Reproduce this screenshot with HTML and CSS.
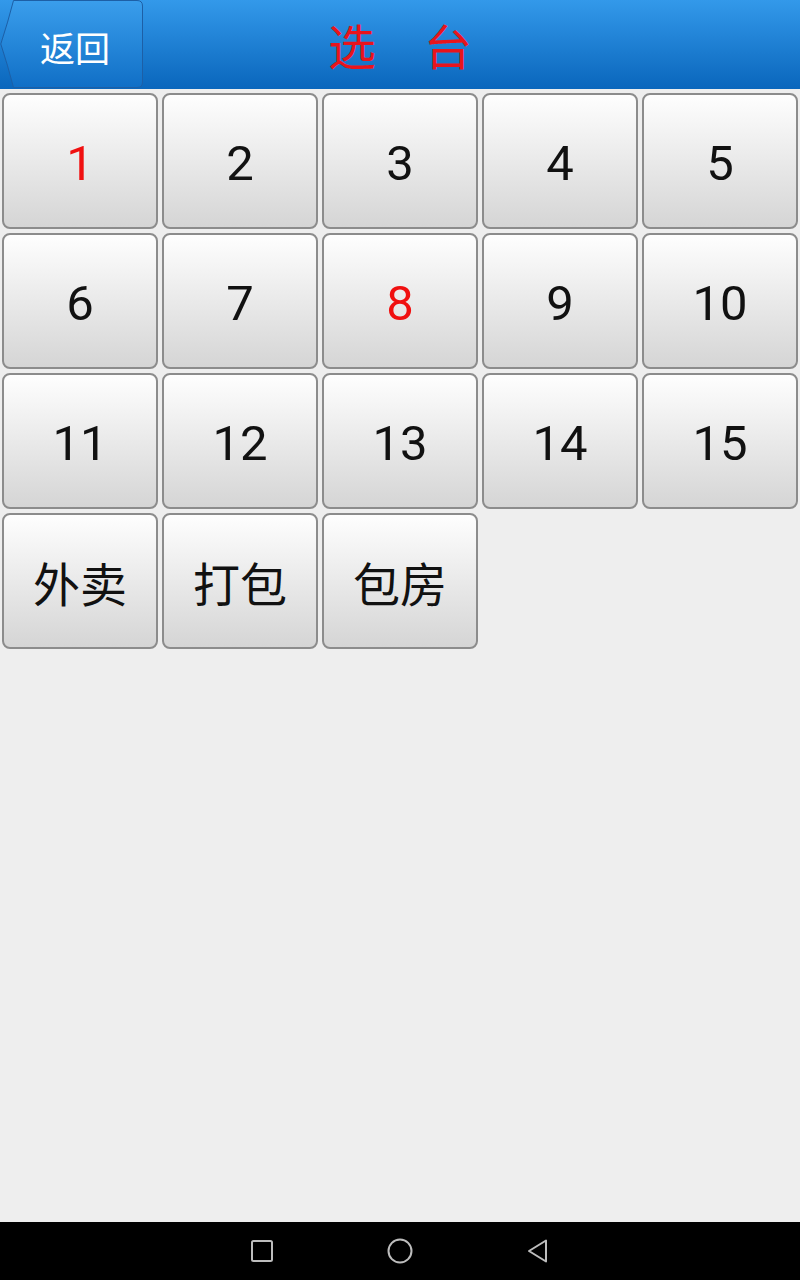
FILE: index.html
```html
<html>
    <head>
        <title>选台</title>
        <link rel="stylesheet" href="styles.css">
    </head>
    <body>
        <div class="screen">
            <div class="header">
                <button class="btn-back">
                    <svg class="back-shape" width="144" height="89" viewBox="0 0 144 89">
                        <defs>
                            <linearGradient id="backGrad" x1="0" y1="0" x2="0" y2="1">
                                <stop offset="0" stop-color="#3a9eec"/>
                                <stop offset="1" stop-color="#106fc6"/>
                            </linearGradient>
                        </defs>
                        <path d="M13.5 0.5 H137 Q142.5 0.5 142.5 6 V82 Q142.5 87.5 137 87.5 H13.5 Q8 66 0.8 44 Q8 22 13.5 0.5 Z" fill="url(#backGrad)" stroke="#1d5fa6" stroke-width="1"/>
                    </svg>
                    <span class="back-text">返回</span>
                </button>
                <div class="title">选　台</div>
            </div>
            <div class="grid">
                <div class="cell cell-active">1</div>
                <div class="cell">2</div>
                <div class="cell">3</div>
                <div class="cell">4</div>
                <div class="cell">5</div>
                <div class="cell">6</div>
                <div class="cell">7</div>
                <div class="cell cell-active">8</div>
                <div class="cell">9</div>
                <div class="cell">10</div>
                <div class="cell">11</div>
                <div class="cell">12</div>
                <div class="cell">13</div>
                <div class="cell">14</div>
                <div class="cell">15</div>
                <div class="cell cell-cn">外卖</div>
                <div class="cell cell-cn">打包</div>
                <div class="cell cell-cn">包房</div>
            </div>
            <div class="navbar">
                <svg width="24" height="24" viewBox="0 0 24 24">
                    <rect x="2" y="2" width="20" height="20" rx="1.5" fill="none" stroke="#bdbdbd" stroke-width="2"/>
                </svg>
                <svg width="28" height="28" viewBox="0 0 28 28">
                    <circle cx="14" cy="14" r="11.5" fill="none" stroke="#bdbdbd" stroke-width="2"/>
                </svg>
                <svg width="24" height="26" viewBox="0 0 24 26">
                    <path d="M20 2.5 V23.5 L3 13 Z" fill="none" stroke="#bdbdbd" stroke-width="2" stroke-linejoin="round"/>
                </svg>
            </div>
        </div>
    </body>
</html>
```

FILE: styles.css
```css
* {
box-sizing: border-box;
}
body {
margin: 0;
background-color: #EEEEEE;
font-family: Roboto, "Noto Sans CJK SC", sans-serif;
}
.screen {
width: 800px;
height: 1280px;
display: flex;
flex-direction: column;
}
.header {
position: relative;
height: 89px;
flex: 0 0 89px;
background: linear-gradient(to bottom, #3399ea, #0a66bc);
display: flex;
align-items: center;
justify-content: center;
}
.btn-back {
position: absolute;
left: 0;
top: 0;
width: 144px;
height: 89px;
padding: 0;
border: none;
background: none;
cursor: pointer;
outline: none;
}
.back-shape {
position: absolute;
left: 0;
top: 0;
}
.back-text {
position: relative;
display: block;
padding: 4px 0 0 6px;
color: #FFFFFF;
font-size: 35px;
font-family: "Noto Sans CJK SC", sans-serif;
}
.title {
color: #E8141C;
font-size: 48px;
font-family: "Noto Sans CJK SC", sans-serif;
line-height: 1;
margin-top: -2px;
}
.grid {
flex: 1;
display: grid;
grid-template-columns: repeat(5, 156px);
grid-auto-rows: 136px;
gap: 4px;
padding: 4px 2px;
align-content: start;
}
.cell {
display: flex;
align-items: center;
justify-content: center;
padding-top: 4px;
border: 2px solid #8C8C8C;
border-radius: 8px;
background: linear-gradient(to bottom, #FEFEFE, #D5D5D5);
color: #111111;
font-size: 49px;
}
.cell-active {
color: #F01010;
}
.cell-cn {
padding-top: 0;
font-family: "Noto Sans CJK SC", sans-serif;
font-size: 47px;
}
.navbar {
flex: 0 0 58px;
background-color: #000000;
display: flex;
align-items: center;
justify-content: center;
gap: 112px;
}
```
